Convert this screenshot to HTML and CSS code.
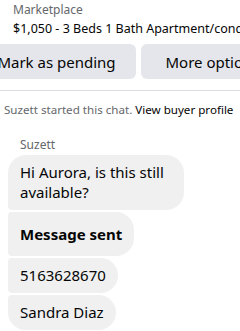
FILE: index.html
```html
<!DOCTYPE html>
<html>
<head>
<meta charset="utf-8">
<link rel="stylesheet" href="styles.css">
</head>
<body>
<div class="page">
  <header class="listing">
    <div class="source">Marketplace</div>
    <div class="title">$1,050 - 3 Beds 1 Bath Apartment/condo for rent</div>
  </header>
  <div class="actions">
    <button class="btn pending">Mark as pending</button>
    <button class="btn more">More options</button>
  </div>
  <hr class="divider">
  <p class="notice">Suzett started this chat. <span class="link">View buyer profile</span></p>
  <div class="thread">
    <div class="sender">Suzett</div>
    <div class="bubble first">Hi Aurora, is this still available?</div>
    <div class="bubble mid bold">Message sent</div>
    <div class="bubble mid">5163628670</div>
    <div class="bubble last">Sandra Diaz</div>
  </div>
</div>
</body>
</html>
```
FILE: styles.css
```css
* { box-sizing: border-box; }
html, body { margin: 0; padding: 0; background: #fff; }
body {
  width: 240px;
  height: 331px;
  overflow: hidden;
  font-family: "Noto Sans", "Open Sans", sans-serif;
  color: #050505;
}
.page { display: flex; flex-direction: column; }
.listing {
  padding: 2px 0 0 13px;
  white-space: nowrap;
  overflow: hidden;
}
.source { font-size: 12px; line-height: 16px; color: #65676b; }
.title { font-size: 12.5px; line-height: 18px; margin-top: 2px; }
.actions {
  display: flex;
  gap: 5px;
  margin: 6px 0 0 -23px;
  white-space: nowrap;
}
.btn {
  height: 35px;
  border: 0;
  border-radius: 6px;
  background: #e4e6eb;
  font-family: inherit;
  font-size: 15px;
  color: #050505;
  padding: 0;
  overflow: hidden;
}
.btn.pending { flex: 0 0 159px; }
.btn.more { flex: 0 0 143px; }
.divider {
  margin: 11px 0 0;
  border: 0;
  border-top: 1px solid #dadde1;
  height: 0;
}
.notice {
  margin: 11px 0 0 4px;
  font-size: 11.6px;
  line-height: 16px;
  color: #65676b;
  white-space: nowrap;
}
.link { color: #050505; }
.thread {
  display: flex;
  flex-direction: column;
  align-items: flex-start;
  gap: 2px;
  padding-left: 8px;
  margin-top: 19px;
}
.sender {
  font-size: 12px;
  line-height: 16px;
  color: #65676b;
  padding-left: 12px;
}
.bubble {
  max-width: 176px;
  background: #f0f0f0;
  font-size: 15px;
  line-height: 20px;
  padding: 7px 12px 8px;
  border-radius: 4px 18px 18px 4px;
}
.bubble.first { border-radius: 18px 18px 18px 4px; }
.bubble.last { border-radius: 4px 18px 18px 18px; }
.bubble.bold { font-weight: 700; padding: 12px 12px 12px; }
```
